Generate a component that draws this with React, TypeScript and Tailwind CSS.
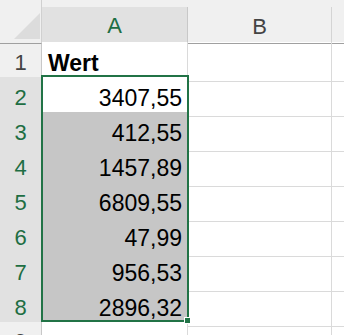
import React from "react";

const rows: { n: number; v: string; bold?: boolean }[] = [
  { n: 1, v: "Wert", bold: true },
  { n: 2, v: "3407,55" },
  { n: 3, v: "412,55" },
  { n: 4, v: "1457,89" },
  { n: 5, v: "6809,55" },
  { n: 6, v: "47,99" },
  { n: 7, v: "956,53" },
  { n: 8, v: "2896,32" },
  { n: 9, v: "" },
];

export default function App() {
  return (
    <div className="relative w-[344px] h-[335px] overflow-hidden bg-white font-['Liberation_Sans',Arial,sans-serif]">
      {/* header */}
      <div className="grid grid-cols-[42px_146px_144px_1fr] h-[42px] bg-[#f0f0f0]">
        <div className="relative border-b border-[#a0a0a0] border-r border-r-[#d0d0d0]">
          <svg className="absolute left-[14px] top-[13px]" width="26" height="26" viewBox="0 0 26 26">
            <polygon points="26,0 26,26 0,26" fill="#dcdcdc" />
          </svg>
        </div>
        <div className="mt-[7px] bg-[#e1e1e1] border-b-2 border-[#217346] border-r border-r-[#c8c8c8] flex items-center justify-center text-[22px] text-[#1e6e43] pt-[2px]">
          A
        </div>
        <div className="mt-[7px] border-b border-[#a0a0a0] border-r border-r-[#d4d4d4] flex items-center justify-center text-[22px] text-[#444444] pt-[2px]">
          B
        </div>
        <div className="mt-[7px] border-b border-[#a0a0a0]"></div>
      </div>
      {rows.map((r) => {
        const sel = r.n >= 2 && r.n <= 8;
        const fill = r.n >= 3 && r.n <= 8;
        return (
          <div key={r.n} className="grid grid-cols-[42px_146px_144px_1fr] h-[35px]">
            <div
              className={
                sel
                  ? "bg-[#e1e1e1] border-b border-[#d0d0d0] border-r border-r-[#c8c8c8] flex items-center justify-center text-[22px] text-[#1e6e43] pt-[3px]"
                  : "bg-[#f0f0f0] border-b border-[#d8d8d8] border-r border-r-[#c8c8c8] flex items-center justify-center text-[22px] text-[#444444] pt-[3px]"
              }
            >
              {r.n}
            </div>
            <div
              className={
                fill
                  ? "bg-[#c6c6c6] border-b border-[#b4b4b4] border-r border-r-[#b4b4b4] flex items-center justify-end pr-[5px] text-[23px] text-black pt-[4px]"
                  : r.bold
                  ? "bg-white border-b border-[#dadada] border-r border-r-[#dadada] flex items-center justify-start pl-[6px] text-[23px] font-bold text-black pt-[4px]"
                  : "bg-white border-b border-[#dadada] border-r border-r-[#dadada] flex items-center justify-end pr-[5px] text-[23px] text-black pt-[4px]"
              }
            >
              {r.v}
            </div>
            <div className="border-b border-[#dadada] border-r border-r-[#dadada]"></div>
            <div className="border-b border-[#dadada]"></div>
          </div>
        );
      })}
      {/* selection outline */}
      <div className="absolute left-[41px] top-[75px] w-[148px] h-[247px] border-2 border-[#217346]"></div>
      <div className="absolute left-[184px] top-[317px] w-[7px] h-[7px] bg-[#217346] border border-white"></div>
    </div>
  );
}
